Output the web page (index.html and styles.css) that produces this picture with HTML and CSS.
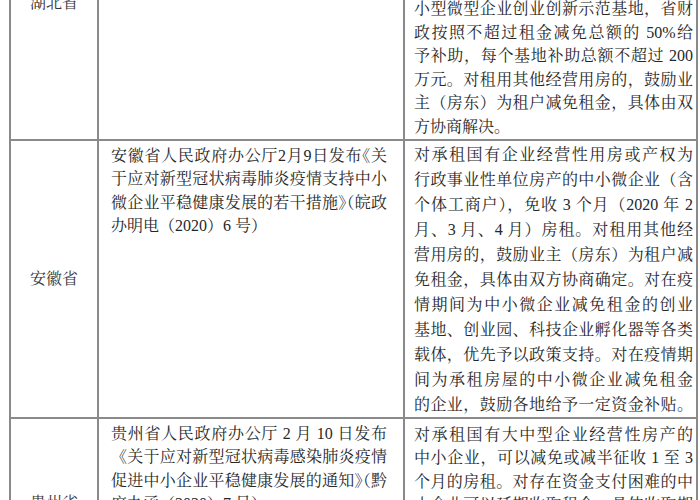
FILE: index.html
```html
<!DOCTYPE html>
<html lang="zh-CN">
<head>
<meta charset="utf-8">
<title>各省中小企业房租减免政策</title>
<link rel="stylesheet" href="styles.css">
</head>
<body>
<table class="policy">
  <colgroup>
    <col class="c-prov">
    <col class="c-doc">
    <col class="c-measure">
  </colgroup>
  <tr class="row-hubei">
    <td class="prov">湖北省</td>
    <td class="doc">
      <span class="ln">湖北省人民政府 2 月 13 日印发《关于</span>
      <span class="ln">应对新型冠状病毒肺炎疫情支持中小微</span>
      <span class="ln">企业共渡难关的若干措施》（鄂政办发</span>
      <span class="ln last">〔2020〕5 号）</span>
    </td>
    <td class="measure">
      <span class="ln">对承租国有资产类经营用房的中小微</span>
      <span class="ln">企业，免收 2 月、3 月、4 月三个月</span>
      <span class="ln">房租。对在疫情期间为租用其经营用</span>
      <span class="ln">房的中小微企业减免租金的国家级和</span>
      <span class="ln">省级科技企业孵化器、众创空间以及</span>
      <span class="ln">小型微型企业创业创新示范基地，省财</span>
      <span class="ln">政按照不超过租金减免总额的 50%给</span>
      <span class="ln">予补助，每个基地补助总额不超过 200</span>
      <span class="ln">万元。对租用其他经营用房的，鼓励业</span>
      <span class="ln">主（房东）为租户减免租金，具体由双</span>
      <span class="ln last">方协商解决。</span>
    </td>
  </tr>
  <tr class="row-anhui">
    <td class="prov">安徽省</td>
    <td class="doc">
      <span class="ln tight">安徽省人民政府办公厅2月9日发布《关</span>
      <span class="ln">于应对新型冠状病毒肺炎疫情支持中小</span>
      <span class="ln tight">微企业平稳健康发展的若干措施》（皖政</span>
      <span class="ln last">办明电（2020）6 号）</span>
    </td>
    <td class="measure">
      <span class="ln">对承租国有企业经营性用房或产权为</span>
      <span class="ln">行政事业性单位房产的中小微企业（含</span>
      <span class="ln">个体工商户），免收 3 个月（2020 年 2</span>
      <span class="ln">月、3 月、4 月）房租。对租用其他经</span>
      <span class="ln">营用房的，鼓励业主（房东）为租户减</span>
      <span class="ln">免租金，具体由双方协商确定。对在疫</span>
      <span class="ln">情期间为中小微企业减免租金的创业</span>
      <span class="ln">基地、创业园、科技企业孵化器等各类</span>
      <span class="ln">载体，优先予以政策支持。对在疫情期</span>
      <span class="ln">间为承租房屋的中小微企业减免租金</span>
      <span class="ln">的企业，鼓励各地给予一定资金补贴。</span>
    </td>
  </tr>
  <tr class="row-guizhou">
    <td class="prov">贵州省</td>
    <td class="doc">
      <span class="ln">贵州省人民政府办公厅 2 月 10 日发布</span>
      <span class="ln">《关于应对新型冠状病毒感染肺炎疫情</span>
      <span class="ln tight">促进中小企业平稳健康发展的通知》（黔</span>
      <span class="ln last">府办函（2020）7 号）</span>
    </td>
    <td class="measure">
      <span class="ln">对承租国有大中型企业经营性房产的</span>
      <span class="ln">中小企业，可以减免或减半征收 1 至 3</span>
      <span class="ln">个月的房租。对存在资金支付困难的中</span>
      <span class="ln">小企业可以延期收取租金，具体收取期</span>
      <span class="ln">限由双方协商解决。对租用其他经营用</span>
      <span class="ln">房的，鼓励业主（房东）为租户减免租</span>
      <span class="ln last">金，具体由双方协商确定。</span>
    </td>
  </tr>
</table>
</body>
</html>
```

FILE: styles.css
```css
html, body {
  margin: 0;
  padding: 0;
  background: #ffffff;
}

body {
  width: 700px;
  height: 500px;
  overflow: hidden;
  font-family: "Liberation Serif", "Noto Serif CJK SC", "Noto Sans CJK SC", serif;
  font-size: 16px;
  line-height: 23.6px;
  color: #272727;
}

.policy {
  margin: -135px 0 0 9px;
  width: 687px;
  table-layout: fixed;
  border-collapse: collapse;
}

.c-prov { width: 88px; }
.c-doc { width: 306px; }
.c-measure { width: 293px; }

.policy td {
  border: 2px solid #8a8a8a;
  vertical-align: top;
}

.policy td.prov {
  text-align: center;
  vertical-align: middle;
  padding: 0;
  color: #363636;
}

.doc {
  padding: 3px 16px 0 12px;
}

.measure {
  padding: 4px 3px 0 9px;
}

.row-hubei .measure {
  padding-top: 12px;
}

.row-anhui .measure {
  padding-top: 1px;
  line-height: 25px;
}

.ln {
  display: block;
  text-align: justify;
  text-align-last: justify;
}

.ln.last {
  text-align-last: left;
}

.ln.tight {
  font-feature-settings: "halt";
}
```
